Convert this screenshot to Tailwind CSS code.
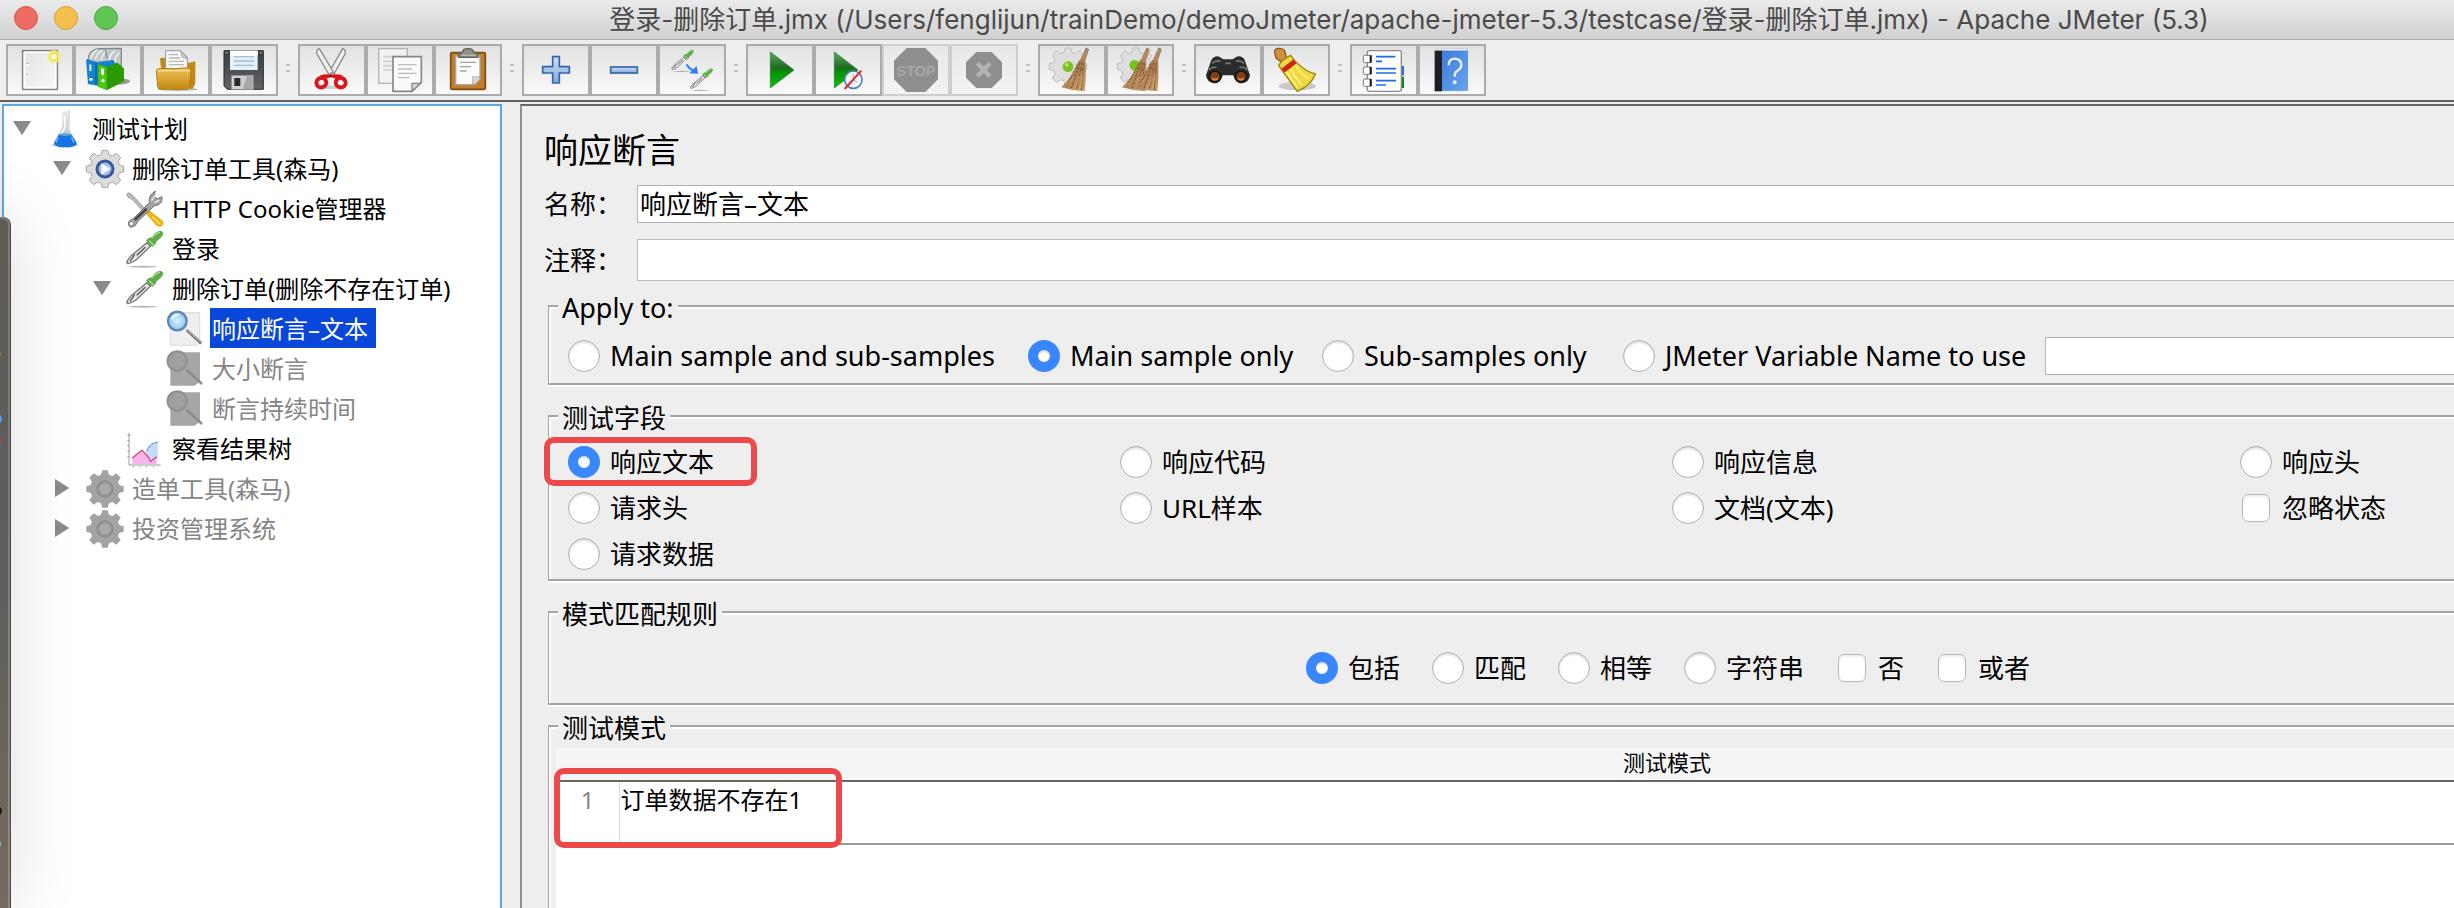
<!DOCTYPE html>
<html lang="zh-CN">
<head>
<meta charset="utf-8">
<title>Apache JMeter (5.3)</title>
<script src="https://cdn.jsdelivr.net/npm/@tailwindcss/browser@4"></script>
</head>
<body class="relative flex flex-col h-screen overflow-hidden bg-[#eee] text-black font-['Noto_Sans','Noto_Sans_CJK_SC',sans-serif] text-[26px]">

<svg class="absolute size-0" aria-hidden="true">
  <defs>
    <linearGradient id="gBlue" x1="0" y1="0" x2="0" y2="1"><stop offset="0" stop-color="#cfe0f4"/><stop offset="1" stop-color="#7fa8dc"/></linearGradient>
    <linearGradient id="gGold" x1="0" y1="0" x2="0" y2="1"><stop offset="0" stop-color="#edbf58"/><stop offset="1" stop-color="#c48a10"/></linearGradient>
    <linearGradient id="gPage" x1="0" y1="0" x2="1" y2="1"><stop offset="0" stop-color="#e2e2e2"/><stop offset="1" stop-color="#fafafa"/></linearGradient>
    <linearGradient id="gPlay" x1="0" y1="0" x2="0" y2="1"><stop offset="0" stop-color="#5aa860"/><stop offset=".45" stop-color="#1c6a20"/><stop offset=".55" stop-color="#069306"/><stop offset="1" stop-color="#10b810"/></linearGradient>
    <linearGradient id="gDisk" x1="0" y1="0" x2="0" y2="1"><stop offset="0" stop-color="#3a3c3f"/><stop offset="1" stop-color="#626468"/></linearGradient>
    <linearGradient id="gGlass" x1="0" y1="0" x2="0" y2="1"><stop offset="0" stop-color="#e6eaee"/><stop offset=".6" stop-color="#c3cdd8"/></linearGradient>
    <linearGradient id="gBook" x1="0" y1="0" x2="1" y2="1"><stop offset="0" stop-color="#3b7bdc"/><stop offset="1" stop-color="#6aa4f0"/></linearGradient>
    <linearGradient id="gBroom" x1="0" y1="0" x2="1" y2="1"><stop offset="0" stop-color="#9a6c42"/><stop offset="1" stop-color="#c79a68"/></linearGradient>
    <radialGradient id="gLens"><stop offset="0" stop-color="#d8f2fc"/><stop offset="1" stop-color="#86c8ea"/></radialGradient>
    <g id="cog">
      <path d="M-8-56H8L12-43 22-39 34-47 47-34 39-22 43-12 56-8V8L43 12 39 22 47 34 34 47 22 39 12 43 8 56H-8L-12 43-22 39-34 47-47 34-39 22-43 12-56 8V-8L-43-12-39-22-47-34-34-47-22-39-12-43Z"/>
    </g>
    <g id="broom">
      <path d="M46-66L54-62 42-26 30-29Z" fill="#b28a5e" stroke="#8d6a44" stroke-width="2"/>
      <path d="M26-30Q38-34 45-24Q47 20 42 64Q4 62-28 52Q6 20 18-14Z" fill="url(#gBroom)"/>
      <path d="M22-20L-14 50M28-22L2 55M34-24L18 58M39-20L32 60M18-6L40 2" fill="none" stroke="#7c5632" stroke-width="3" stroke-dasharray="9 3"/>
      <path d="M10 22L-20 52M26 20L10 58M36 16L26 60" fill="none" stroke="#dcb888" stroke-width="2"/>
    </g>
    <g id="pipette">
      <ellipse cx="428" cy="500" rx="42" ry="3" fill="#b5b5b5"/>
      <path d="M441 428L451 439 408 480Q396 488 383 491L380 487Q384 476 395 466Z" fill="#e4e4e4" stroke="#777" stroke-width="4"/>
      <path d="M404 463L390 484M436 442L410 466" stroke="#555" stroke-width="4"/>
      <path d="M439 420Q446 412 455 412Q466 394 480 392Q492 394 489 405Q482 416 470 424Q468 434 459 440Q452 440 446 434Q438 428 439 420Z" fill="#63aa4e"/>
      <path d="M455 414Q468 398 480 397M447 422L462 436" stroke="#a4d48e" stroke-width="5" fill="none"/>
    </g>
  </defs>
</svg>

<header class="relative flex h-10 shrink-0 items-center justify-center border-b border-[#acacac] bg-linear-to-b from-[#ebebeb] to-[#d1d1d1] px-3.5">
  <div class="absolute left-3.5 top-1.5 flex gap-4">
    <button aria-label="关闭" class="size-6 rounded-full border border-[#d8574c] bg-[#ed6b60]"></button>
    <button aria-label="最小化" class="size-6 rounded-full border border-[#d9a03c] bg-[#f5bf4f]"></button>
    <button aria-label="缩放" class="size-6 rounded-full border border-[#4aa73c] bg-[#61c554]"></button>
  </div>
  <h1 class="pl-[364px] text-[26px] leading-9 whitespace-nowrap text-[#4a4a4a] font-['Inter','Noto_Sans_CJK_SC',sans-serif]">登录-删除订单.jmx (/Users/fenglijun/trainDemo/demoJmeter/apache-jmeter-5.3/testcase/登录-删除订单.jmx) - Apache JMeter (5.3)</h1>
</header>

<nav aria-label="工具栏" class="flex h-[62px] shrink-0 items-start gap-2 border-b-2 border-[#606060] px-1.5 pt-1">
  <div class="flex">
    <button aria-label="新建" class="h-[52px] w-[68px] border-2 border-[#ababab] bg-linear-to-b from-[#e2e2e2] to-[#f9f9f9]">
      <svg class="size-full" viewBox="24 138 192 144"><rect x="68" y="152" width="104" height="116" fill="url(#gPage)" stroke="#808080" stroke-width="5"/><rect x="73" y="157" width="94" height="106" fill="none" stroke="#fff" stroke-width="5"/><path d="M80 196h8M80 228h8" stroke="#fff" stroke-width="6"/><path d="M80 190h5M80 224h5" stroke="#999" stroke-width="3"/><circle cx="162" cy="170" r="20" fill="#f6ec80" opacity=".75"/><circle cx="162" cy="170" r="14" fill="#f2e440"/><circle cx="162" cy="170" r="8" fill="#fffff0"/></svg>
    </button>
    <button aria-label="模板" class="h-[52px] w-[68px] border-2 border-[#ababab] bg-linear-to-b from-[#e2e2e2] to-[#f9f9f9]">
      <svg class="size-full" viewBox="228 138 192 144"><ellipse cx="352" cy="244" rx="38" ry="10" fill="#999"/><path d="M264 180Q266 150 296 146L364 145V196L320 200Z" fill="#c3c7ca" stroke="#7f898f" stroke-width="4"/><path d="M272 176Q276 156 292 150M286 178Q292 158 306 152M304 180Q308 160 320 152M326 180Q332 160 346 152M344 184Q348 166 358 158" stroke="#eceeef" stroke-width="5" fill="none"/><path d="M316 148L322 176" stroke="#7f898f" stroke-width="4"/><path d="M258 178L292 186 340 180 350 200 320 262 264 252Z" fill="#1283cc"/><path d="M288 188V254" stroke="#0a5c96" stroke-width="4"/><path d="M268 192L274 194V214L268 212Z" fill="#dff0fb"/><circle cx="273" cy="238" r="5" fill="#fff"/><path d="M294 192L320 202 352 188 372 206V244L320 270 294 260Z" fill="#3cb108"/><path d="M320 202L352 188 372 206V244L320 270Z" fill="#2a9a04"/><path d="M296 194L320 203V268L296 259Z" fill="#4cc814"/><path d="M304 204L312 207V226L304 223Z" fill="#fff"/><circle cx="309" cy="242" r="5" fill="#fff"/></svg>
    </button>
    <button aria-label="打开" class="h-[52px] w-[68px] border-2 border-[#ababab] bg-linear-to-b from-[#e2e2e2] to-[#f9f9f9]">
      <svg class="size-full" viewBox="432 138 192 144"><ellipse cx="534" cy="268" rx="60" ry="5" fill="#bbb"/><path d="M480 176Q482 172 496 174V190H560L586 184V250L578 266H490Z" fill="#c08a14"/><path d="M497 152H542L562 172V212H497Z" fill="#f7f7f7" stroke="#8e9698" stroke-width="3"/><path d="M542 152L546 172 562 176Z" fill="#c8cdd0" stroke="#8e9698" stroke-width="2"/><path d="M506 164H534M506 174H540M506 184H552M506 194H552" stroke="#b8b8b8" stroke-width="4"/><path d="M469 212Q469 206 478 206H528L542 204H568Q574 206 573 214L568 262Q566 268 558 268H484Q474 268 473 260Z" fill="url(#gGold)" stroke="#b57f10" stroke-width="3"/><path d="M474 212H568" stroke="#fbe2a0" stroke-width="4"/></svg>
    </button>
    <button aria-label="保存" class="h-[52px] w-[68px] border-2 border-[#ababab] bg-linear-to-b from-[#e2e2e2] to-[#f9f9f9]">
      <svg class="size-full" viewBox="636 138 192 144"><path d="M672 152H790V268H682L672 258Z" fill="url(#gDisk)" stroke="#2d2d2f" stroke-width="3"/><rect x="690" y="152" width="83" height="58" fill="#e6f0fa"/><path d="M690 152H773V166Q730 176 690 166Z" fill="#fff"/><path d="M702 170H762M702 183H762M702 196H762" stroke="#9fbcd8" stroke-width="4"/><rect x="694" y="226" width="66" height="42" fill="#cfcfcf" stroke="#8a8a8a" stroke-width="2"/><path d="M728 268L742 226H758V268Z" fill="#a8a8a8"/><rect x="703" y="234" width="18" height="24" fill="#2a2a2c"/><path d="M676 158h8M779 158h8" stroke="#888" stroke-width="5"/></svg>
    </button>
  </div>
  <span class="mt-5 h-2 w-1 border-y-2 border-[#c4c3b4]"></span>
  <div class="flex">
    <button aria-label="剪切" class="h-[52px] w-[68px] border-2 border-[#ababab] bg-linear-to-b from-[#e2e2e2] to-[#f9f9f9]">
      <svg class="size-full" viewBox="900 138 192 144"><ellipse cx="992" cy="262" rx="40" ry="5" fill="#ccc"/><g fill="#efefef" stroke="#8c8c88" stroke-width="4"><path d="M1028 146Q1040 150 1034 164L1002 222 988 216Z"/><path d="M958 146Q946 150 952 164L986 222 1000 216Z"/></g><g fill="none" stroke="#d8171c" stroke-width="12"><ellipse cx="964" cy="248" rx="15" ry="14" transform="rotate(-25 964 248)"/><ellipse cx="1022" cy="248" rx="15" ry="14" transform="rotate(25 1022 248)"/></g><path d="M960 226Q980 220 993 224Q1006 220 1028 226L1016 238 993 232 970 238Z" fill="#d8171c"/><circle cx="992" cy="227" r="4" fill="#8d0d10"/></svg>
    </button>
    <button aria-label="复制" class="h-[52px] w-[68px] border-2 border-[#ababab] bg-linear-to-b from-[#e2e2e2] to-[#f9f9f9]">
      <svg class="size-full" viewBox="1104 138 192 144"><g fill="#f2f2f2" stroke="#b4b4b4" stroke-width="4"><path d="M1136 146H1222V250H1136Z"/></g><path d="M1150 170H1206M1150 184H1180M1150 197H1176M1150 210H1176" stroke="#d0d0d0" stroke-width="5"/><path d="M1179 170H1264V246L1236 274H1179Z" fill="#fafafa" stroke="#868686" stroke-width="5"/><path d="M1194 194H1250M1194 207H1236M1194 220H1250M1194 233H1228" stroke="#bdbdbd" stroke-width="4"/><path d="M1236 274V250H1262Z" fill="#d5d5d5" stroke="#868686" stroke-width="4"/></svg>
    </button>
    <button aria-label="粘贴" class="h-[52px] w-[68px] border-2 border-[#ababab] bg-linear-to-b from-[#e2e2e2] to-[#f9f9f9]">
      <svg class="size-full" viewBox="1308 138 192 144"><rect x="1352" y="158" width="104" height="110" rx="4" fill="#c07f2c" stroke="#7e4d0e" stroke-width="5"/><path d="M1367 168H1440V238L1424 254H1367Z" fill="#fbfbfb" stroke="#a5a5a5" stroke-width="4"/><path d="M1380 187H1428M1380 200H1414M1380 213H1400" stroke="#a4a4a4" stroke-width="4"/><path d="M1418 252V230H1440Z" fill="#ddd" stroke="#999" stroke-width="2"/><path d="M1376 172Q1376 158 1388 156Q1388 146 1404 146Q1420 146 1420 156Q1434 158 1434 172Z" fill="#8f918b" stroke="#5d5f5a" stroke-width="4"/><path d="M1384 166H1426" stroke="#b8bab4" stroke-width="4"/></svg>
    </button>
  </div>
  <span class="mt-5 h-2 w-1 border-y-2 border-[#c4c3b4]"></span>
  <div class="flex">
    <button aria-label="展开" class="h-[52px] w-[68px] border-2 border-[#ababab] bg-linear-to-b from-[#e2e2e2] to-[#f9f9f9]">
      <svg class="size-full" viewBox="42 138 192 144"><path d="M128 170H148V200H178V219H148V249H128V219H98V200H128Z" fill="url(#gBlue)" stroke="#3465a4" stroke-width="5"/></svg>
    </button>
    <button aria-label="折叠" class="h-[52px] w-[68px] border-2 border-[#ababab] bg-linear-to-b from-[#e2e2e2] to-[#f9f9f9]">
      <svg class="size-full" viewBox="246 138 192 144"><rect x="302" y="201" width="80" height="18" fill="url(#gBlue)" stroke="#3465a4" stroke-width="5"/></svg>
    </button>
    <button aria-label="切换" class="h-[52px] w-[68px] border-2 border-[#ababab] bg-linear-to-b from-[#e2e2e2] to-[#f9f9f9]">
      <svg class="size-full" viewBox="450 138 192 144"><svg x="482" y="146" width="72" height="74" viewBox="375 388 120 120"><use href="#pipette"/></svg><svg x="538" y="202" width="74" height="74" viewBox="375 388 120 120"><use href="#pipette"/></svg><path d="M530 193Q536 206 550 212" fill="none" stroke="#2e7cf6" stroke-width="6"/><path d="M560 198L564 221 538 220Z" fill="#2e7cf6"/></svg>
    </button>
  </div>
  <span class="mt-5 h-2 w-1 border-y-2 border-[#c4c3b4]"></span>
  <div class="flex">
    <button aria-label="启动" class="h-[52px] w-[68px] border-2 border-[#ababab] bg-linear-to-b from-[#e2e2e2] to-[#f9f9f9]">
      <svg class="size-full" viewBox="714 138 192 144"><path d="M781 156L852 210 781 264Z" fill="url(#gPlay)" stroke="#2b7a2f" stroke-width="2"/></svg>
    </button>
    <button aria-label="不停顿开始" class="h-[52px] w-[68px] border-2 border-[#ababab] bg-linear-to-b from-[#e2e2e2] to-[#f9f9f9]">
      <svg class="size-full" viewBox="918 138 192 144"><path d="M973 156L1044 210 973 264Z" fill="url(#gPlay)" stroke="#2b7a2f" stroke-width="2"/><circle cx="1030" cy="239" r="26" fill="#f2f4f8" stroke="#4a80c0" stroke-width="5"/><path d="M1030 222V240L1042 246" stroke="#9ab" stroke-width="3" fill="none"/><path d="M1054 212L1004 267" stroke="#dc2a2a" stroke-width="6"/></svg>
    </button>
    <button disabled aria-label="停止" class="h-[52px] w-[68px] border-2 border-[#cecece] bg-linear-to-b from-[#e8e8e8] to-[#f3f3f3]">
      <svg class="size-full" viewBox="1122 138 192 144"><path d="M1190 144H1246L1284 182V238L1246 276H1190L1152 238V182Z" fill="#8f8f8f"/><text x="1218" y="227" text-anchor="middle" font-family="Liberation Sans" font-weight="700" font-size="43" fill="#a8a8a8">STOP</text></svg>
    </button>
    <button disabled aria-label="关闭线程" class="h-[52px] w-[68px] border-2 border-[#cecece] bg-linear-to-b from-[#e8e8e8] to-[#f3f3f3]">
      <svg class="size-full" viewBox="1326 138 192 144"><path d="M1399 156H1445L1476 187V233L1445 264H1399L1368 233V187Z" fill="#8f8f8f"/><path d="M1402 190L1440 229M1440 190L1402 229" stroke="#b4b4b4" stroke-width="13"/></svg>
    </button>
  </div>
  <span class="mt-5 h-2 w-1 border-y-2 border-[#c4c3b4]"></span>
  <div class="flex">
    <button aria-label="清除" class="h-[52px] w-[68px] border-2 border-[#ababab] bg-linear-to-b from-[#e2e2e2] to-[#f9f9f9]">
      <svg class="size-full" viewBox="60 138 192 144"><use href="#cog" transform="translate(144 200)" fill="#dedede" stroke="#bcbcbc" stroke-width="3"/><circle cx="144" cy="200" r="16" fill="#78c41c"/><circle cx="140" cy="194" r="6" fill="#b4e470"/><use href="#broom" transform="translate(152 210)"/></svg>
    </button>
    <button aria-label="清除全部" class="h-[52px] w-[68px] border-2 border-[#ababab] bg-linear-to-b from-[#e2e2e2] to-[#f9f9f9]">
      <svg class="size-full" viewBox="264 138 192 144"><use href="#cog" transform="translate(348 200)" fill="#dedede" stroke="#bcbcbc" stroke-width="3"/><circle cx="344" cy="196" r="16" fill="#78c41c"/><use href="#broom" transform="translate(334 210)"/><use href="#broom" transform="translate(370 210)"/></svg>
    </button>
  </div>
  <span class="mt-5 h-2 w-1 border-y-2 border-[#c4c3b4]"></span>
  <div class="flex">
    <button aria-label="查找" class="h-[52px] w-[68px] border-2 border-[#ababab] bg-linear-to-b from-[#e2e2e2] to-[#f9f9f9]">
      <svg class="size-full" viewBox="528 138 192 144"><path d="M574 180Q584 166 598 170L610 178H638L650 170Q666 166 674 180L690 226Q688 246 666 250Q644 248 640 226H608Q604 248 582 250Q560 246 558 226Z" fill="#2b2b2b"/><path d="M576 190Q586 180 602 184M648 184Q662 180 672 190M616 190H632M566 210Q574 200 590 202M658 202Q676 200 682 210" stroke="#777" stroke-width="5" fill="none"/><circle cx="585" cy="230" r="17" fill="#7a3f14" stroke="#111" stroke-width="5"/><circle cx="663" cy="230" r="17" fill="#7a3f14" stroke="#111" stroke-width="5"/><path d="M576 234Q584 244 594 234M654 234Q662 244 672 234" stroke="#d98c4c" stroke-width="5" fill="none"/></svg>
    </button>
    <button aria-label="重置查找" class="h-[52px] w-[68px] border-2 border-[#ababab] bg-linear-to-b from-[#e2e2e2] to-[#f9f9f9]">
      <svg class="size-full" viewBox="732 138 192 144"><ellipse cx="832" cy="258" rx="56" ry="13" fill="#c9c9c9"/><path d="M764 158Q762 148 774 145Q788 144 794 152L800 176 784 186 768 174Z" fill="#cf9140" stroke="#8d5a14" stroke-width="4"/><path d="M776 196Q784 180 812 166L824 182Q854 214 886 222Q874 256 832 274Q806 238 788 214Z" fill="#f0d93e" stroke="#9d8410" stroke-width="4"/><path d="M826 196Q842 222 866 236M812 208Q826 234 846 254M800 214Q814 240 832 262" stroke="#fdf49c" stroke-width="4" fill="none"/><path d="M786 206L820 180 828 190 794 216Z" fill="#d8201a" stroke="#a01010" stroke-width="2"/></svg>
    </button>
  </div>
  <span class="mt-5 h-2 w-1 border-y-2 border-[#c4c3b4]"></span>
  <div class="flex">
    <button aria-label="函数助手" class="h-[52px] w-[68px] border-2 border-[#ababab] bg-linear-to-b from-[#e2e2e2] to-[#f9f9f9]">
      <svg class="size-full" viewBox="996 138 192 144"><rect x="1138" y="198" width="14" height="28" fill="#2b6be0"/><rect x="1138" y="230" width="14" height="34" fill="#0a8a1a"/><rect x="1042" y="152" width="102" height="122" rx="6" fill="#fdfdfd" stroke="#8a8a8a" stroke-width="4"/><g fill="#fff" stroke="#777" stroke-width="3"><rect x="1030" y="166" width="24" height="22" rx="3"/><rect x="1030" y="201" width="24" height="22" rx="3"/><rect x="1030" y="237" width="24" height="22" rx="3"/></g><path d="M1052 166v22M1052 201v22M1052 237v22" stroke="#1b1b1b" stroke-width="6"/><path d="M1068 170H1126M1068 184H1086M1068 206H1128M1068 219H1128M1068 242H1128M1068 255H1098" stroke="#1f6be6" stroke-width="5"/></svg>
    </button>
    <button aria-label="帮助" class="h-[52px] w-[68px] border-2 border-[#ababab] bg-linear-to-b from-[#e2e2e2] to-[#f9f9f9]">
      <svg class="size-full" viewBox="1200 138 192 144"><path d="M1244 152L1254 145H1344V268L1334 274H1244Z" fill="#b9c4cf"/><path d="M1244 152H1266V274H1244Z" fill="#1d1f22"/><path d="M1266 152H1344V272H1266Z" fill="url(#gBook)"/><path d="M1248 150L1256 146H1342L1340 151Z" fill="#e8eef4"/><path d="M1286 196Q1286 176 1305 176Q1325 178 1324 196Q1322 208 1310 214Q1304 218 1304 230" fill="none" stroke="#e6f0ff" stroke-width="7"/><circle cx="1304" cy="247" r="6" fill="#e6f0ff"/></svg>
    </button>
  </div>
</nav>

<main class="flex min-h-0 grow gap-[18px] pt-0.5 pl-0.5">
  <aside class="w-[500px] shrink-0 border-2 border-b-0 border-[#58a8e8] bg-white">
    <ul role="tree" class="pt-0.5 text-2xl leading-[38px] whitespace-nowrap">
      <li role="treeitem" class="flex h-10 items-center">
        <button aria-label="收起" class="h-10 w-[41px]"><svg class="size-full" viewBox="12 24 123 120"><path d="M39 63H93L66 106Z" fill="#8a8a8a"/></svg></button>
        <svg class="size-10" viewBox="135 24 120 120"><ellipse cx="195" cy="135" rx="42" ry="4" fill="#b5c0cc"/><path d="M188 34H206V84L230 128Q230 142 196 142Q162 142 162 128L186 84Z" fill="url(#gGlass)"/><path d="M207 30V82" stroke="#c4ccd4" stroke-width="3"/><path d="M194 48V84L182 104" stroke="#fff" stroke-width="5" fill="none"/><path d="M176 104H214L230 128Q230 142 196 142Q162 142 162 128Z" fill="#1474e4"/><path d="M174 112L168 128M214 112L222 128" stroke="#6db0f6" stroke-width="5"/><ellipse cx="195" cy="104" rx="19" ry="4" fill="#5f9fd6"/></svg>
        <span class="ml-[5px] px-0.5 pt-0.5">测试计划</span>
      </li>
      <li role="treeitem" class="flex h-10 items-center pl-10">
        <button aria-label="收起" class="h-10 w-[41px]"><svg class="size-full" viewBox="12 24 123 120"><path d="M39 63H93L66 106Z" fill="#8a8a8a"/></svg></button>
        <svg class="size-10" viewBox="255 144 120 120"><use href="#cog" transform="translate(315 207)" fill="#dcdcdc" stroke="#a4a4a4" stroke-width="3"/><circle cx="315" cy="207" r="24" fill="#a9c0e2" stroke="#35599c" stroke-width="9"/><path d="M304 190L332 207 304 224Z" fill="#f6f9ff"/></svg>
        <span class="ml-[5px] px-0.5 pt-0.5">删除订单工具(森马)</span>
      </li>
      <li role="treeitem" class="flex h-10 items-center pl-[121px]">
        <svg class="size-10" viewBox="375 264 120 120"><path d="M380 282L388 278 400 288 444 336 438 342 396 298 384 292Z" fill="#b9b9b9" stroke="#888" stroke-width="2"/><path d="M437 338L447 332 488 364Q492 376 480 379L470 376Z" fill="#f2b90c" stroke="#c48c08" stroke-width="2"/><path d="M456 350L480 372" stroke="#ffe37a" stroke-width="4"/><path d="M386 366Q390 358 400 356L448 308Q444 286 466 273L462 290 472 296 486 290Q490 314 462 318L412 366Q408 380 394 382Q382 380 386 366Z" fill="#a2a2a2" stroke="#777" stroke-width="3"/><path d="M404 360L440 326" stroke="#4a4a4a" stroke-width="8"/><path d="M454 302L466 286M478 300L464 308" stroke="#e4e4e4" stroke-width="5"/><circle cx="394" cy="371" r="6" fill="#fff" stroke="#777" stroke-width="2"/></svg>
        <span class="ml-[5px] px-0.5 pt-0.5">HTTP Cookie管理器</span>
      </li>
      <li role="treeitem" class="flex h-10 items-center pl-[121px]">
        <svg class="size-10" viewBox="375 384 120 120"><use href="#pipette"/></svg>
        <span class="ml-[5px] px-0.5 pt-0.5">登录</span>
      </li>
      <li role="treeitem" class="flex h-10 items-center pl-20">
        <button aria-label="收起" class="h-10 w-[41px]"><svg class="size-full" viewBox="12 24 123 120"><path d="M39 63H93L66 106Z" fill="#8a8a8a"/></svg></button>
        <svg class="size-10" viewBox="375 384 120 120"><use href="#pipette"/></svg>
        <span class="ml-[5px] px-0.5 pt-0.5">删除订单(删除不存在订单)</span>
      </li>
      <li role="treeitem" aria-selected="true" class="flex h-10 items-center pl-[161px]">
        <svg class="size-10" viewBox="495 84 120 120"><path d="M511 98H599V190L590 196H511Z" fill="#efefef" stroke="#dadada" stroke-width="3"/><path d="M560 150L604 190" stroke="#777" stroke-width="9"/><path d="M560 148L604 188" stroke="#c8c8c8" stroke-width="3"/><circle cx="532" cy="123" r="28" fill="url(#gLens)" stroke="#5f84b4" stroke-width="7"/><path d="M516 118Q520 104 536 104" stroke="#f2fbff" stroke-width="6" fill="none"/></svg>
        <span class="ml-[5px] bg-[#0847d9] pt-0.5 pr-2 pl-0.5 text-white">响应断言–文本</span>
      </li>
      <li role="treeitem" class="flex h-10 items-center pl-[161px] text-[#858585]">
        <svg class="size-10" viewBox="495 84 120 120"><path d="M511 97H600V184L584 197H511Z" fill="#a6a6a6"/><path d="M560 150L606 192" stroke="#8c8c8c" stroke-width="8"/><circle cx="532" cy="123" r="29" fill="#9f9f9f" stroke="#929292" stroke-width="7"/></svg>
        <span class="ml-[5px] px-0.5 pt-0.5">大小断言</span>
      </li>
      <li role="treeitem" class="flex h-10 items-center pl-[161px] text-[#858585]">
        <svg class="size-10" viewBox="495 84 120 120"><path d="M511 97H600V184L584 197H511Z" fill="#a6a6a6"/><path d="M560 150L606 192" stroke="#8c8c8c" stroke-width="8"/><circle cx="532" cy="123" r="29" fill="#9f9f9f" stroke="#929292" stroke-width="7"/></svg>
        <span class="ml-[5px] px-0.5 pt-0.5">断言持续时间</span>
      </li>
      <li role="treeitem" class="flex h-10 items-center pl-[121px]">
        <svg class="size-10" viewBox="375 324 120 120"><path d="M473 366Q448 368 440 396Q438 410 448 420L473 418Z" fill="#c3dcfa"/><path d="M473 367Q448 368 440 396" stroke="#5b9af0" stroke-width="4" stroke-dasharray="9 3" fill="none"/><path d="M397 414Q414 400 426 391Q440 402 452 424L470 410V432H397Z" fill="#f9b4ea"/><path d="M397 414Q414 400 426 391Q440 402 452 424L470 410" stroke="#cc4a80" stroke-width="4" fill="none"/><path d="M387 338V435H482" stroke="#9b9b9b" stroke-width="3" fill="none"/><path d="M382 346h10M382 362h6M382 378h6M382 394h6M382 410h6M400 438v4M420 438v4M440 438v4M460 438v4" stroke="#9b9b9b" stroke-width="3"/></svg>
        <span class="ml-[5px] px-0.5 pt-0.5">察看结果树</span>
      </li>
      <li role="treeitem" class="flex h-10 items-center pl-10 text-[#858585]">
        <button aria-label="展开" class="h-10 w-[41px]"><svg class="size-full" viewBox="132 444 123 120"><path d="M165 477V531L208 504Z" fill="#8a8a8a"/></svg></button>
        <svg class="size-10" viewBox="255 444 120 120"><use href="#cog" transform="translate(315 507)" fill="#a3a3a3"/><circle cx="315" cy="507" r="22" fill="#a9a9a9" stroke="#8f8f8f" stroke-width="8"/></svg>
        <span class="ml-[5px] px-0.5 pt-0.5">造单工具(森马)</span>
      </li>
      <li role="treeitem" class="flex h-10 items-center pl-10 text-[#858585]">
        <button aria-label="展开" class="h-10 w-[41px]"><svg class="size-full" viewBox="132 444 123 120"><path d="M165 477V531L208 504Z" fill="#8a8a8a"/></svg></button>
        <svg class="size-10" viewBox="255 444 120 120"><use href="#cog" transform="translate(315 507)" fill="#a3a3a3"/><circle cx="315" cy="507" r="22" fill="#a9a9a9" stroke="#8f8f8f" stroke-width="8"/></svg>
        <span class="ml-[5px] px-0.5 pt-0.5">投资管理系统</span>
      </li>
    </ul>
  </aside>

  <section class="flex min-w-0 grow flex-col border-t-2 border-l-2 border-t-[#666] border-l-[#909090] pt-[21px]">
    <h2 class="pl-[22px] text-[34px] leading-[46px]">响应断言</h2>
    <div class="mt-3 flex h-[38px] items-center pl-[22px]">
      <label for="name" class="w-[93px]">名称：</label>
      <input id="name" value="响应断言–文本" class="h-[38px] min-w-0 grow border border-r-0 border-[#b4b4b4] bg-white px-0.5 outline-none">
    </div>
    <div class="mt-4 flex h-[42px] items-center pl-[22px]">
      <label for="comment" class="w-[93px]">注释：</label>
      <input id="comment" class="h-[42px] min-w-0 grow border border-r-0 border-[#bcbcbc] bg-white px-0.5 outline-none">
    </div>

    <fieldset class="mt-[7px] ml-[26px] min-w-0 border-0 border-t-2 border-b-2 border-l border-[#a5a5a5] pt-[13px] pb-2 pl-[9px] shadow-[inset_2px_2px_0_#fff,0_2px_0_#fff]">
      <legend class="bg-[#eee] px-1 pt-1 text-[27px] leading-8">Apply to:</legend>
      <div class="flex h-[38px] items-center pl-2.5 text-[27px] whitespace-nowrap">
        <label class="flex w-[460px] items-center gap-2.5"><input type="radio" name="scope" class="size-8 appearance-none rounded-full border border-[#b0b0b0] bg-white shadow-[inset_0_2px_2px_#0002] checked:border-[10px] checked:border-[#3a87fd]">Main sample and sub-samples</label>
        <label class="flex w-[294px] items-center gap-2.5"><input type="radio" name="scope" checked class="size-8 appearance-none rounded-full border border-[#b0b0b0] bg-white shadow-[inset_0_2px_2px_#0002] checked:border-[10px] checked:border-[#3a87fd]">Main sample only</label>
        <label class="flex w-[301px] items-center gap-2.5"><input type="radio" name="scope" class="size-8 appearance-none rounded-full border border-[#b0b0b0] bg-white shadow-[inset_0_2px_2px_#0002] checked:border-[10px] checked:border-[#3a87fd]">Sub-samples only</label>
        <label class="flex w-[422px] items-center gap-2.5"><input type="radio" name="scope" class="size-8 appearance-none rounded-full border border-[#b0b0b0] bg-white shadow-[inset_0_2px_2px_#0002] checked:border-[10px] checked:border-[#3a87fd]">JMeter Variable Name to use</label>
        <input aria-label="JMeter Variable Name" class="h-[38px] min-w-0 grow border border-r-0 border-[#b4b4b4] bg-white px-0.5 outline-none">
      </div>
    </fieldset>

    <fieldset class="mt-[13px] ml-[26px] min-w-0 border-0 border-t-2 border-b-2 border-l border-[#a5a5a5] pt-[5px] pb-0.5 pl-[9px] shadow-[inset_2px_2px_0_#fff,0_2px_0_#fff]">
      <legend class="bg-[#eee] px-1 pt-1 leading-8">测试字段</legend>
      <div class="grid auto-rows-[46px] grid-cols-[552fr_552fr_568fr_214fr] pl-2.5 whitespace-nowrap">
        <label class="relative flex items-center gap-2.5"><input type="radio" name="field" checked class="size-8 appearance-none rounded-full border border-[#b0b0b0] bg-white shadow-[inset_0_2px_2px_#0002] checked:border-[10px] checked:border-[#3a87fd]">响应文本<span class="absolute top-[-2px] left-[-24px] h-[49px] w-[213px] rounded-[10px] border-6 border-[#ec4a4a]"></span></label>
        <label class="flex items-center gap-2.5"><input type="radio" name="field" class="size-8 appearance-none rounded-full border border-[#b0b0b0] bg-white shadow-[inset_0_2px_2px_#0002]">响应代码</label>
        <label class="flex items-center gap-2.5"><input type="radio" name="field" class="size-8 appearance-none rounded-full border border-[#b0b0b0] bg-white shadow-[inset_0_2px_2px_#0002]">响应信息</label>
        <label class="flex items-center gap-2.5"><input type="radio" name="field" class="size-8 appearance-none rounded-full border border-[#b0b0b0] bg-white shadow-[inset_0_2px_2px_#0002]">响应头</label>
        <label class="flex items-center gap-2.5"><input type="radio" name="field" class="size-8 appearance-none rounded-full border border-[#b0b0b0] bg-white shadow-[inset_0_2px_2px_#0002]">请求头</label>
        <label class="flex items-center gap-2.5"><input type="radio" name="field" class="size-8 appearance-none rounded-full border border-[#b0b0b0] bg-white shadow-[inset_0_2px_2px_#0002]">URL样本</label>
        <label class="flex items-center gap-2.5"><input type="radio" name="field" class="size-8 appearance-none rounded-full border border-[#b0b0b0] bg-white shadow-[inset_0_2px_2px_#0002]">文档(文本)</label>
        <label class="flex items-center gap-3 pl-0.5"><input type="checkbox" class="size-7 appearance-none rounded-md border border-[#b8b8b8] bg-white shadow-[inset_0_2px_2px_#0001]">忽略状态</label>
        <label class="flex items-center gap-2.5"><input type="radio" name="field" class="size-8 appearance-none rounded-full border border-[#b0b0b0] bg-white shadow-[inset_0_2px_2px_#0002]">请求数据</label>
      </div>
    </fieldset>

    <fieldset class="mt-[13px] ml-[26px] min-w-0 border-0 border-t-2 border-b-2 border-l border-[#a5a5a5] pt-[22px] pb-[19px] pl-[9px] shadow-[inset_2px_2px_0_#fff,0_2px_0_#fff]">
      <legend class="bg-[#eee] px-1 pt-1 leading-8">模式匹配规则</legend>
      <div class="flex h-8 items-center justify-center gap-8 pl-[324px] whitespace-nowrap">
        <label class="flex items-center gap-2.5"><input type="radio" name="rule" checked class="size-8 appearance-none rounded-full border border-[#b0b0b0] bg-white shadow-[inset_0_2px_2px_#0002] checked:border-[10px] checked:border-[#3a87fd]">包括</label>
        <label class="flex items-center gap-2.5"><input type="radio" name="rule" class="size-8 appearance-none rounded-full border border-[#b0b0b0] bg-white shadow-[inset_0_2px_2px_#0002]">匹配</label>
        <label class="flex items-center gap-2.5"><input type="radio" name="rule" class="size-8 appearance-none rounded-full border border-[#b0b0b0] bg-white shadow-[inset_0_2px_2px_#0002]">相等</label>
        <label class="flex items-center gap-2.5"><input type="radio" name="rule" class="size-8 appearance-none rounded-full border border-[#b0b0b0] bg-white shadow-[inset_0_2px_2px_#0002]">字符串</label>
        <label class="flex items-center gap-3 pl-0.5"><input type="checkbox" class="size-7 appearance-none rounded-md border border-[#b8b8b8] bg-white shadow-[inset_0_2px_2px_#0001]">否</label>
        <label class="flex items-center gap-3 pl-0.5"><input type="checkbox" class="size-7 appearance-none rounded-md border border-[#b8b8b8] bg-white shadow-[inset_0_2px_2px_#0001]">或者</label>
      </div>
    </fieldset>

    <fieldset class="mt-[3px] ml-[26px] min-w-0 grow border-0 border-t-2 border-l border-[#a5a5a5] pt-1 pl-[7px] shadow-[inset_2px_2px_0_#fff]">
      <legend class="ml-0.5 bg-[#eee] px-1 pt-1 leading-8">测试模式</legend>
      <div class="relative h-full bg-white">
        <table class="w-full border-collapse">
          <thead>
            <tr><th colspan="2" class="h-[33px] border-b-2 border-[#666] bg-[#f5f5f5] p-0 pl-[324px] align-top text-[22px] leading-[28px] font-normal">测试模式</th></tr>
          </thead>
          <tbody>
            <tr class="border-b-2 border-[#999]">
              <td class="h-[63px] w-[63px] border-r border-[#ddd] p-0 pr-6 text-right align-top text-2xl leading-9 text-[#858585]">1</td>
              <td class="p-0 align-top"><textarea aria-label="测试模式 1" rows="1" class="block h-[61px] w-full resize-none overflow-hidden px-px text-2xl leading-9 outline-none">订单数据不存在1</textarea></td>
            </tr>
          </tbody>
        </table>
        <span class="absolute top-5 left-[-2px] h-20 w-72 rounded-[10px] border-6 border-[#ec4a4a]"></span>
      </div>
    </fieldset>
  </section>
</main>

<div class="absolute top-[217px] bottom-0 left-[-120px] w-[131px] rounded-tr-lg border-r border-[#4a4a4a] bg-linear-to-b from-[#5e5a56] from-0% via-[#5c5e5c] via-50% to-[#756a60] shadow-[0_0_70px_#0002]">
  <div class="h-full rounded-tr-lg border-t-2 border-r-2 border-white/20"></div>
  <svg class="absolute top-0 left-[120px] h-[691px] w-2" viewBox="0 0 8 691" aria-hidden="true"><circle cx="-2" cy="137" r="3" fill="#b07a3c"/><circle cx="-3" cy="202" r="5" fill="#5a9cf8"/><circle cx="-3" cy="224" r="4" fill="#d8402c"/><circle cx="-3" cy="594" r="5" fill="#151515"/><circle cx="-3" cy="627" r="4" fill="#6cc8c0"/></svg>
</div>
</body>
</html>
